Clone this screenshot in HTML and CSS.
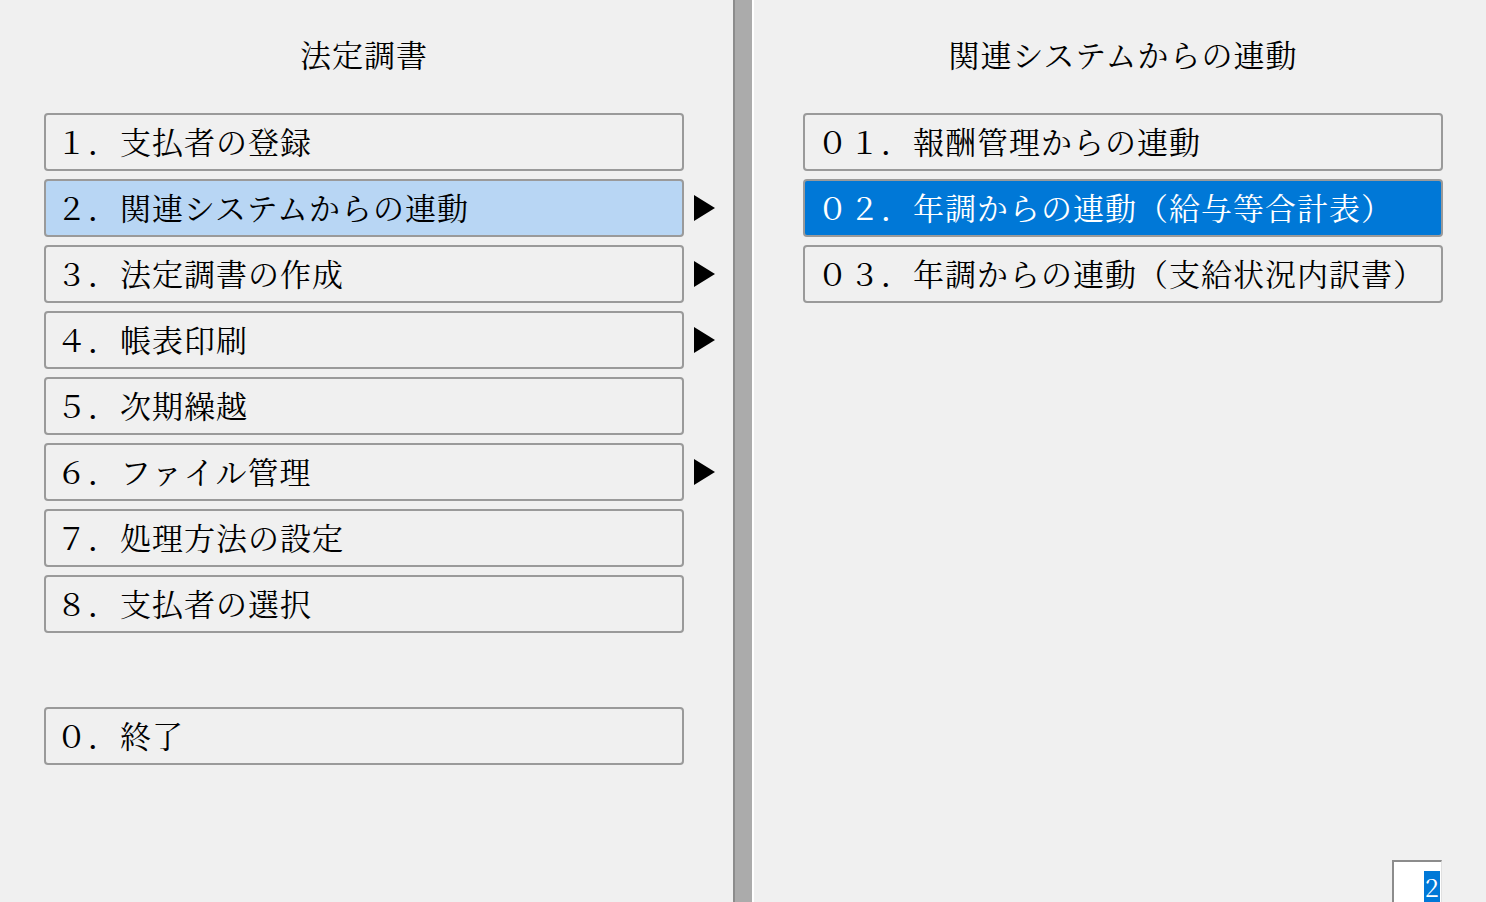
FILE: index.html
```html
<!DOCTYPE html>
<html>

<head>
  <title>法定調書</title>
  <meta charset="UTF-8">
  <link rel="stylesheet" href="styles.css">
</head>

<body>
  <div class="screen">
    <section class="panel panel-left">
      <div class="column">
        <h1 class="title">法定調書</h1>
        <ul class="menu">
          <li class="row"><button class="item">１．支払者の登録</button></li>
          <li class="row"><button class="item current">２．関連システムからの連動</button><span class="arrow"></span></li>
          <li class="row"><button class="item">３．法定調書の作成</button><span class="arrow"></span></li>
          <li class="row"><button class="item">４．帳表印刷</button><span class="arrow"></span></li>
          <li class="row"><button class="item">５．次期繰越</button></li>
          <li class="row"><button class="item">６．ファイル管理</button><span class="arrow"></span></li>
          <li class="row"><button class="item">７．処理方法の設定</button></li>
          <li class="row"><button class="item">８．支払者の選択</button></li>
          <li class="row spacer"></li>
          <li class="row"><button class="item">０．終了</button></li>
        </ul>
      </div>
    </section>

    <div class="divider"></div>

    <section class="panel panel-right">
      <div class="column">
        <h1 class="title">関連システムからの連動</h1>
        <ul class="menu">
          <li class="row"><button class="item">０１．報酬管理からの連動</button></li>
          <li class="row"><button class="item active">０２．年調からの連動（給与等合計表）</button></li>
          <li class="row"><button class="item">０３．年調からの連動（支給状況内訳書）</button></li>
        </ul>
      </div>
      <div class="entry"><span class="entry-value">2</span></div>
    </section>
  </div>
</body>

</html>
```

FILE: styles.css
```css
body {
  margin: 0;
  padding: 0;
  background-color: #f0f0f0;
  font-family: "Noto Serif CJK JP", "Noto Sans CJK JP", serif;
  color: #000;
  overflow: hidden;
}

.screen {
  display: flex;
  height: 902px;
}

.panel {
  display: flex;
  flex-direction: column;
}

.panel-left {
  width: 733px;
  padding-left: 44px;
  box-sizing: border-box;
}

.panel-right {
  flex: 1;
  padding-left: 49px;
}

.column {
  width: 640px;
}

.title {
  margin: 0;
  padding-top: 33px;
  height: 113px;
  box-sizing: border-box;
  font-size: 31px;
  font-weight: normal;
  line-height: 42px;
  text-align: center;
  letter-spacing: 1px;
}

.menu {
  list-style: none;
  margin: 0;
  padding: 0;
  display: flex;
  flex-direction: column;
  gap: 8px;
}

.row {
  display: flex;
  align-items: center;
  height: 58px;
  width: 700px;
}

.item {
  width: 640px;
  height: 58px;
  box-sizing: border-box;
  border: 2px solid #9a9a9a;
  border-radius: 4px;
  background-color: #f0f0f0;
  font-family: inherit;
  font-size: 31px;
  letter-spacing: 1px;
  text-align: left;
  padding: 0 0 4px 10px;
  color: #000;
  line-height: 1;
}

.panel-right .item {
  padding-left: 12px;
}

.item.current {
  background-color: #b8d6f4;
}

.item.active {
  background-color: #0078d7;
  color: #fff;
}

.arrow {
  margin-left: 10px;
  width: 0;
  height: 0;
  border-top: 13px solid transparent;
  border-bottom: 13px solid transparent;
  border-left: 21px solid #000;
}

.divider {
  width: 17px;
  flex-shrink: 0;
  background-color: #ababab;
  border-left: 2px solid #8c8c8c;
  border-right: 2px solid #fff;
}

.entry {
  margin-top: auto;
  align-self: flex-end;
  margin-right: 44px;
  width: 50px;
  height: 42px;
  box-sizing: border-box;
  background-color: #fff;
  border-top: 2px solid #8c8c8c;
  border-left: 2px solid #8c8c8c;
  border-right: 1px solid #e0e0e0;
  display: flex;
  justify-content: flex-end;
  align-items: flex-end;
  padding-right: 1px;
}

.entry-value {
  background-color: #0078d7;
  color: #fff;
  font-size: 25px;
  line-height: 31px;
  width: 16px;
  text-align: center;
}
```
